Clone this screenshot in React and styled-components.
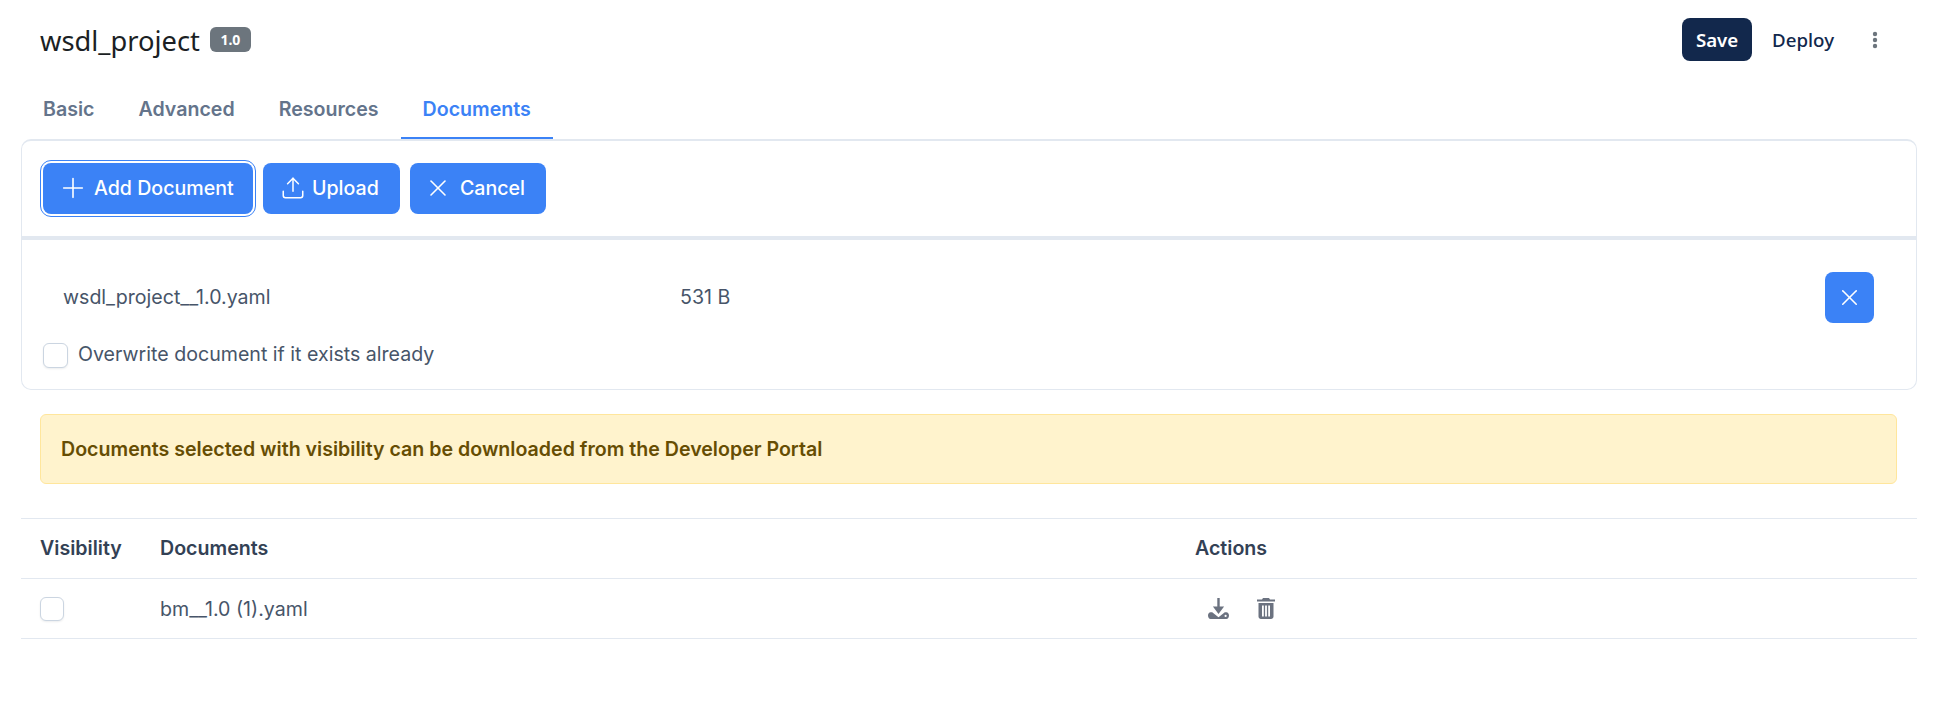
import React from 'react';
import styled, { createGlobalStyle } from 'styled-components';
import { Plus, Upload, X } from 'lucide-react';

const GlobalStyle = createGlobalStyle`
  html, body {
    margin: 0;
    background: #fff;
    font-family: Inter, "Liberation Sans", sans-serif;
    font-size: 19.6px;
    color: #334155;
  }
`;

const Header = styled.header`
  display: flex;
  align-items: center;
  justify-content: space-between;
  height: 43px;
  padding: 18px 60px 0 40px;
`;

const TitleGroup = styled.div`
  display: flex;
  align-items: center;
  gap: 10px;
`;

const Title = styled.h1`
  margin: 0;
  padding-top: 2px;
  font: 400 27.3px/40px "Noto Sans", sans-serif;
  color: #1b1f24;
`;

const Badge = styled.span`
  display: inline-flex;
  align-items: center;
  justify-content: center;
  width: 41px;
  height: 25px;
  border-radius: 6px;
  background: #6c757d;
  color: #fff;
  font: 700 14px "Noto Sans", sans-serif;
`;

const HeaderActions = styled.div`
  display: flex;
  align-items: center;
`;

const SaveButton = styled.button`
  width: 70px;
  height: 43px;
  border: 0;
  border-radius: 8px;
  background: #12284c;
  color: #fff;
  font: 600 18.7px "Noto Sans", sans-serif;
`;

const DeployButton = styled.button`
  margin-left: 20px;
  padding: 0;
  border: 0;
  background: none;
  color: #12284c;
  font: 500 18.7px "Noto Sans", sans-serif;
`;

const MoreButton = styled.span`
  display: flex;
  margin-left: 38px;
  color: #6c757d;
`;

const Tabs = styled.nav`
  display: flex;
  margin: 18px 21px 0;
`;

const Tab = styled.a`
  display: flex;
  align-items: center;
  box-sizing: border-box;
  padding: 2px 22px 0;
  height: 60px;
  font-weight: 600;
  color: ${p => (p.$active ? '#3b82f6' : '#64748b')};
  border-bottom: 2px solid ${p => (p.$active ? '#3b82f6' : 'transparent')};
`;

const Card = styled.section`
  margin: 0 21px;
  border: 1px solid #e2e8f0;
  border-top: 2px solid #e2e8f0;
  border-radius: 10px;
  height: 251px;
  box-sizing: border-box;
`;

const Toolbar = styled.div`
  display: flex;
  gap: 10px;
  padding: 22px 0 22px 21px;
  border-bottom: 4px solid #e2e8f0;
`;

const ActionButton = styled.button`
  display: inline-flex;
  align-items: center;
  gap: ${p => p.$gap}px;
  box-sizing: border-box;
  width: ${p => p.$width}px;
  height: 51px;
  padding: 0 0 1px ${p => p.$pad}px;
  border: 0;
  border-radius: 8px;
  background: #3b82f6;
  color: #fff;
  font: 500 19.6px Inter, sans-serif;
  outline: ${p => (p.$focus ? '1px solid #3b82f6' : 'none')};
  outline-offset: 2px;
`;

const FileRow = styled.div`
  display: flex;
  align-items: center;
  height: 51px;
  margin-top: 32px;
  padding: 0 42px 0 41px;
  color: #475569;
`;

const FileName = styled.span`
  width: 617px;
  padding-bottom: 2px;
`;

const FileSize = styled.span`
  flex: 1;
  padding-bottom: 2px;
`;

const IconButton = styled.button`
  display: flex;
  align-items: center;
  justify-content: center;
  width: 49px;
  height: 51px;
  padding: 0;
  border: 0;
  border-radius: 8px;
  background: #3b82f6;
  color: #fff;
`;

const CheckRow = styled.label`
  display: flex;
  align-items: center;
  gap: 10px;
  margin: 19px 0 0 21px;
  color: #475569;
`;

const CheckText = styled.span`
  padding-bottom: 2px;
`;

const CheckBox = styled.span`
  display: block;
  width: ${p => p.$size}px;
  height: ${p => p.$size}px;
  box-sizing: border-box;
  border: 1px solid #cbd5e1;
  border-radius: 6px;
  background: #fff;
  box-shadow: 0 1px 2px rgba(15, 23, 42, 0.08);
`;

const Notice = styled.div`
  display: flex;
  align-items: center;
  box-sizing: border-box;
  height: 70px;
  margin: 24px 41px 0 40px;
  padding-left: 20px;
  border: 1px solid #ffe69c;
  border-radius: 6px;
  background: #fff3cd;
  color: #664d03;
  font-weight: 600;
`;

const Table = styled.div`
  margin: 34px 21px 0;
  border-top: 1px solid #e2e8f0;
`;

const TableRow = styled.div`
  display: grid;
  grid-template-columns: 120px 1035px 1fr;
  align-items: center;
  height: 60px;
  box-sizing: border-box;
  padding-left: 19px;
  border-bottom: 1px solid #e2e8f0;
  font-weight: ${p => (p.$head ? 600 : 400)};
  color: ${p => (p.$head ? '#334155' : '#475569')};
`;

const HeadCell = styled.span`
  padding-bottom: 2px;
`;

const RowActions = styled.div`
  display: flex;
  align-items: center;
  gap: 28px;
  padding-left: 13px;
  color: #6b7280;
`;

const MoreIcon = () => (
  <svg width="6" height="18" viewBox="0 0 6 18" fill="currentColor">
    <circle cx="3" cy="3" r="2.2" />
    <circle cx="3" cy="9" r="2.2" />
    <circle cx="3" cy="15" r="2.2" />
  </svg>
);

const DownloadIcon = () => (
  <svg width="21" height="21" viewBox="0 0 21 21" fill="currentColor">
    <path d="M9.300 0h2.400v8.600h4.400l-5.600 7.400-5.600-7.400h4.400z" />
    <path d="M2.600 14.300h1.600l6.300 4.900 6.300-4.900h1.600c1.500 0 2.600 1.400 2.600 3.300s-1.100 3.400-2.600 3.400H2.600C1.100 21 0 19.500 0 17.600s1.100-3.300 2.600-3.300z" />
    <circle cx="17.600" cy="17.900" r="1.100" fill="#fff" />
  </svg>
);

const TrashIcon = () => (
  <svg width="18" height="21" viewBox="0 0 18 21" fill="currentColor">
    <path d="M6 0h6l1 1.500h5V3.600H0V1.500h5z" />
    <path fillRule="evenodd" d="M1.500 5h15v13.500c0 1.400-1.100 2.500-2.500 2.500H4c-1.400 0-2.500-1.100-2.500-2.500zM5 7.500v11h1.800v-11zm3.100 0v11h1.800v-11zm3.100 0v11H13v-11z" />
  </svg>
);

const App = () => {
  return (
    <>
      <GlobalStyle />
      <Header>
        <TitleGroup>
          <Title>wsdl_project</Title>
          <Badge>1.0</Badge>
        </TitleGroup>
        <HeaderActions>
          <SaveButton>Save</SaveButton>
          <DeployButton>Deploy</DeployButton>
          <MoreButton>
            <MoreIcon />
          </MoreButton>
        </HeaderActions>
      </Header>
      <Tabs>
        <Tab>Basic</Tab>
        <Tab>Advanced</Tab>
        <Tab>Resources</Tab>
        <Tab $active>Documents</Tab>
      </Tabs>
      <Card>
        <Toolbar>
          <ActionButton $width={210} $pad={14} $gap={5} $focus>
            <Plus size={32} strokeWidth={1.2} />
            Add Document
          </ActionButton>
          <ActionButton $width={137} $pad={17} $gap={6}>
            <Upload size={26} strokeWidth={1.4} />
            Upload
          </ActionButton>
          <ActionButton $width={136} $pad={14} $gap={8}>
            <X size={28} strokeWidth={1.4} />
            Cancel
          </ActionButton>
        </Toolbar>
        <FileRow>
          <FileName>wsdl_project__1.0.yaml</FileName>
          <FileSize>531 B</FileSize>
          <IconButton>
            <X size={27} strokeWidth={1.4} />
          </IconButton>
        </FileRow>
        <CheckRow>
          <CheckBox $size={25} />
          <CheckText>Overwrite document if it exists already</CheckText>
        </CheckRow>
      </Card>
      <Notice>Documents selected with visibility can be downloaded from the Developer Portal</Notice>
      <Table>
        <TableRow $head>
          <HeadCell>Visibility</HeadCell>
          <HeadCell>Documents</HeadCell>
          <HeadCell>Actions</HeadCell>
        </TableRow>
        <TableRow>
          <CheckBox $size={24} />
          <span>bm__1.0 (1).yaml</span>
          <RowActions>
            <DownloadIcon />
            <TrashIcon />
          </RowActions>
        </TableRow>
      </Table>
    </>
  );
};

export default App;
